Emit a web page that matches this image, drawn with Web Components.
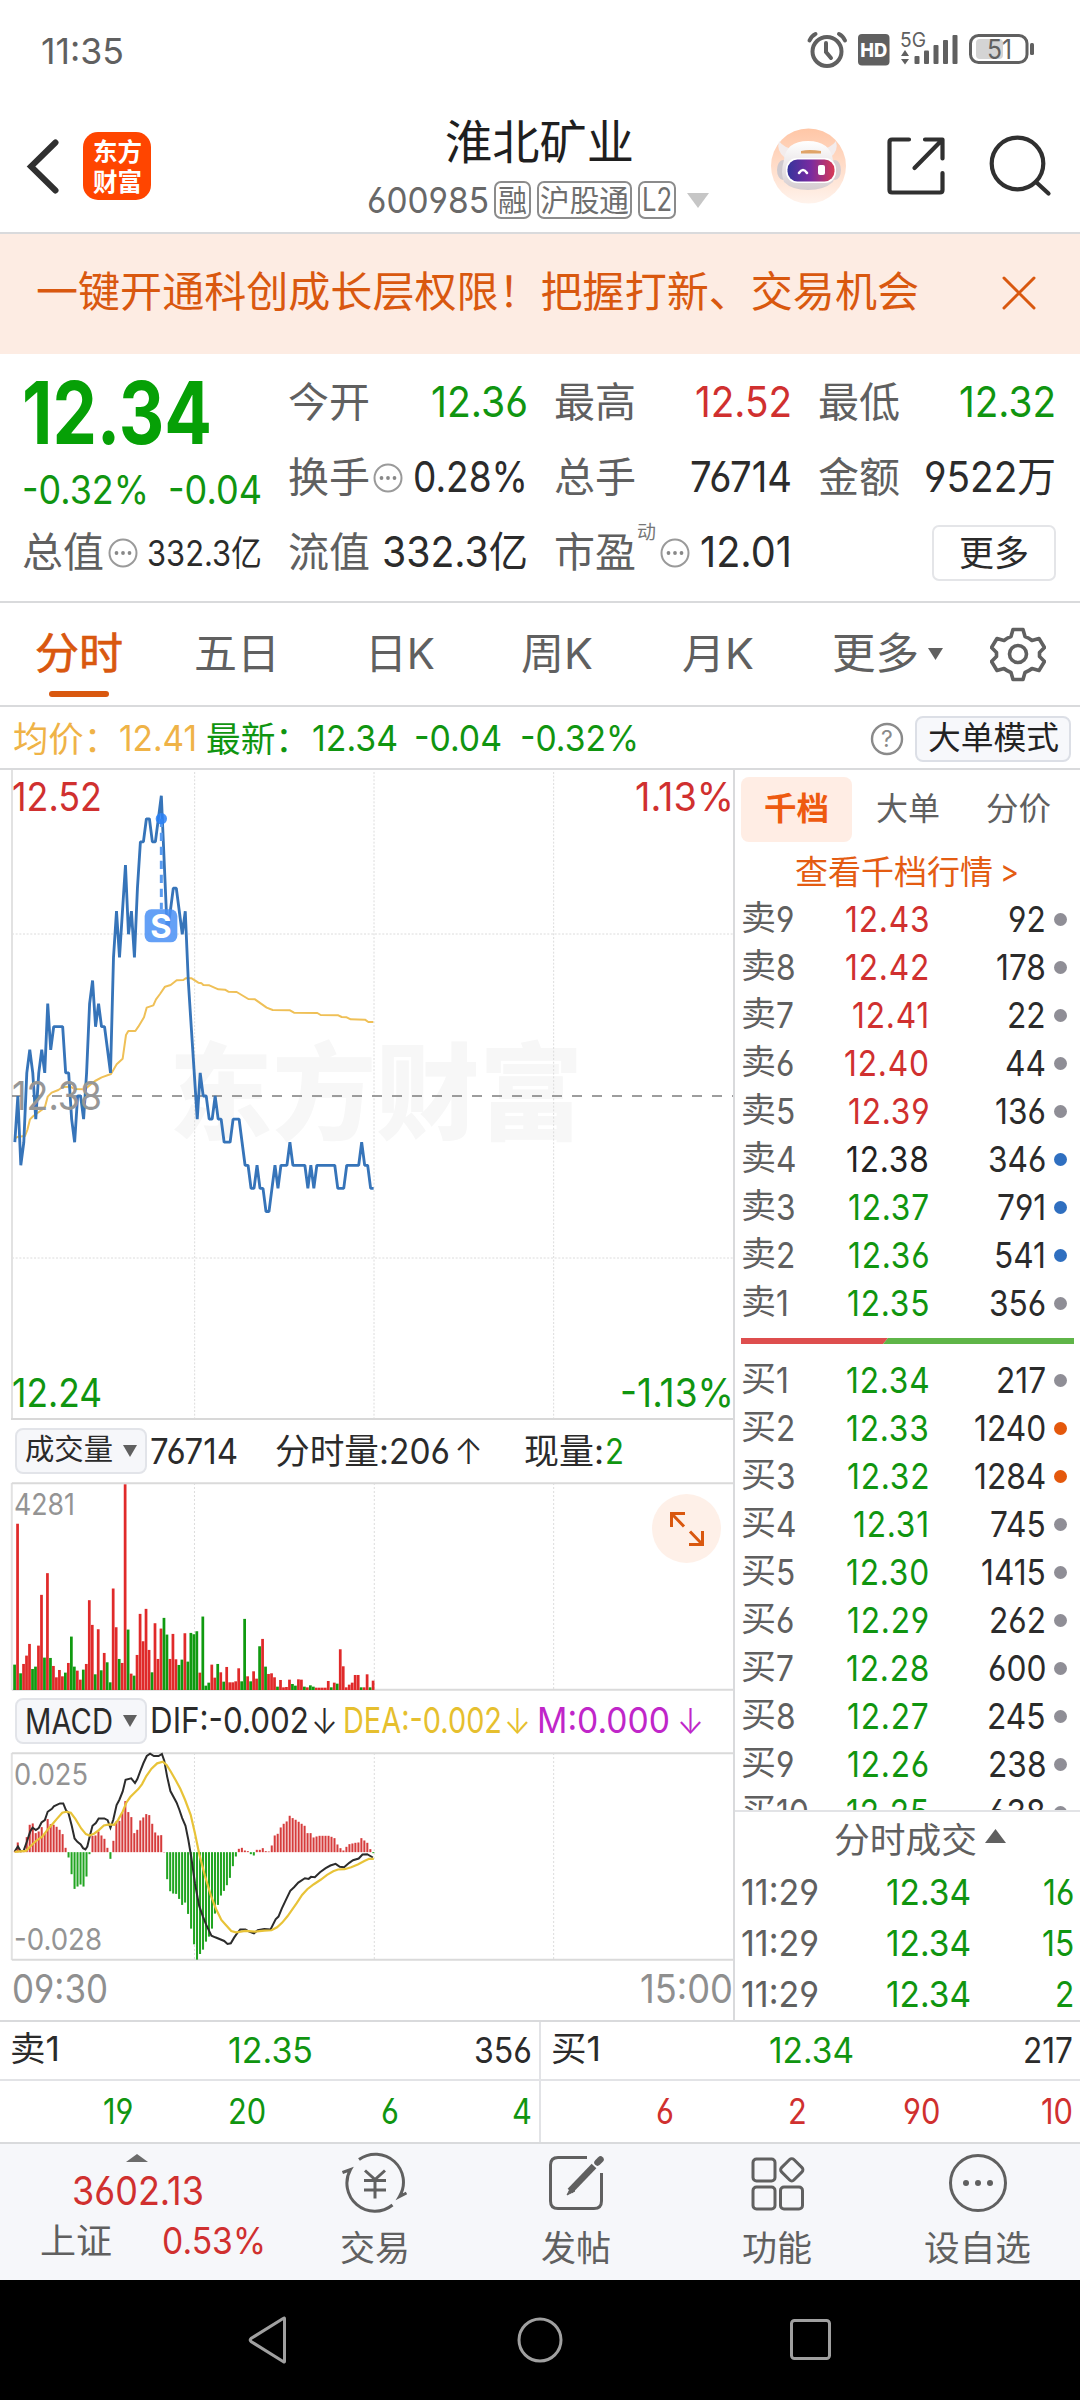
<!DOCTYPE html>
<html lang="zh-CN">
<head>
<meta charset="utf-8">
<title>淮北矿业 600985</title>
<style>
    body {
        margin: 0;
        width: 1080px;
        height: 2400px;
        overflow: hidden;
        background: #fff;
        color: #2b2b2b;
        font-family: Inter, "Noto Sans CJK SC", sans-serif;
        font-feature-settings: "cv03", "cv04";
        font-size: 36px;
        --up: #d0302f;
        --down: #109510;
        --accent: #d9580f;
        --muted: #606060;
        --line: #d9dadc;
    }
</style>
</head>
<body>
<status-bar></status-bar>
<stock-header></stock-header>
<promo-banner>一键开通科创成长层权限！把握打新、交易机会</promo-banner>
<quote-panel></quote-panel>
<period-tabs></period-tabs>
<info-row></info-row>
<trade-board></trade-board>
<level-one></level-one>
<bottom-nav></bottom-nav>
<system-nav></system-nav>

<script>
// Single line of text squeezed to a width (w) or by a ratio (k)
class FitText extends HTMLElement {
    constructor() {
        super();
        this.attachShadow({ mode: 'open' });
        this.shadowRoot.innerHTML = `
            <style>
                :host { display: block; flex: none; white-space: nowrap; line-height: 1.2; }
                span { display: inline-block; transform-origin: 0 50%; vertical-align: top; }
            </style>
            <span><slot></slot></span>
        `;
    }

    connectedCallback() {
        const span = this.shadowRoot.querySelector('span');
        const size = this.getAttribute('s');
        if (size) this.style.fontSize = size + 'px';
        const natural = span.getBoundingClientRect().width;
        const target = this.hasAttribute('w')
            ? Number(this.getAttribute('w'))
            : natural * Number(this.getAttribute('k') || 0.88);
        span.style.transform = `scaleX(${target / natural})`;
        this.style.width = target + 'px';
    }
}
customElements.define('fit-text', FitText);

function t(text, w, s, style = '') {
    const width = w ? `w="${w}"` : '';
    return `<fit-text ${width} s="${s}" style="${style}">${text}</fit-text>`;
}

function define(name, css, html) {
    customElements.define(name, class extends HTMLElement {
        constructor() {
            super();
            this.attachShadow({ mode: 'open' });
        }
        connectedCallback() {
            this.shadowRoot.innerHTML = `<style>
                * { box-sizing: border-box; }
                svg { display: block; flex: none; }
                ${css}
            </style>${typeof html === 'function' ? html(this) : html}`;
        }
    });
}

const more = `<svg width="30" height="30" viewBox="0 0 30 30"><circle cx="15" cy="15" r="13.5" fill="none" stroke="#9a9a9a" stroke-width="2"/><g fill="#888"><circle cx="8.5" cy="15" r="1.9"/><circle cx="15" cy="15" r="1.9"/><circle cx="21.5" cy="15" r="1.9"/></g></svg>`;

define('status-bar', `
    :host { display: flex; height: 101px; justify-content: space-between; align-items: center; color: #606060; padding-left: 41px; box-sizing: border-box; }
`, `
    ${t('11:35', 83, 36, 'margin-top:2px')}
    <svg width="260" height="101" viewBox="820 0 260 101" style="overflow: visible">
        <g fill="none" stroke="#606060" stroke-width="4" stroke-linecap="round">
            <circle cx="827" cy="51.5" r="14.5"/>
            <path d="M826 43v9l5 6M809.500 40.500q2-4.500 6-6.500M845 40.500q-2-4.500-6-6.500"/>
        </g>
        <rect x="858" y="34" width="31.500" height="31.500" rx="4" fill="#606060"/>
        <text x="873.800" y="56.500" font-size="19" font-weight="800" fill="#fff" text-anchor="middle" textLength="27" lengthAdjust="spacingAndGlyphs">HD</text>
        <text x="900" y="46.500" font-size="20" fill="#606060" textLength="26" lengthAdjust="spacingAndGlyphs">5G</text>
        <g fill="#606060">
            <path d="M901 56l4-6 4 6zM901 59h8l-4 5.500z"/>
            <rect x="914.500" y="56" width="5" height="8" rx="1"/>
            <rect x="924" y="50.500" width="5" height="13.500" rx="1"/>
            <rect x="933.500" y="45" width="5" height="19" rx="1"/>
            <rect x="943" y="40" width="5" height="24" rx="1"/>
            <rect x="952.500" y="35" width="5" height="29" rx="1"/>
            <rect x="1030" y="43" width="4" height="12" rx="1.500"/>
        </g>
        <rect x="976" y="39" width="27" height="20" rx="4" fill="#d4d4d4"/>
        <rect x="970.500" y="35.500" width="56.500" height="27" rx="8" fill="none" stroke="#606060" stroke-width="3"/>
        <text x="987" y="58.500" font-size="27" fill="#606060" textLength="25" lengthAdjust="spacingAndGlyphs">51</text>
    </svg>
`);

define('stock-header', `
    :host { display: flex; height: 133px; align-items: flex-start; border-bottom: 2px solid var(--line); box-sizing: border-box; }
    .back { margin: 37px 0 0 26px; }
    .logo { width: 68px; height: 68px; margin: 31px 0 0 22px; border-radius: 15px; background: #ff4500; color: #fff; font-weight: 700; display: flex; flex-direction: column; align-items: center; padding-top: 5px; }
    .mid { width: 370px; margin: 13px 0 0 203px; display: flex; flex-direction: column; align-items: center; }
    .sub { display: flex; align-items: center; width: 100%; padding-left: 13px; color: #686868; height: 42px; margin-top: 9px; }
    .tag { border: 2px solid #8b8b8b; border-radius: 7px; height: 38px; display: flex; align-items: center; justify-content: center; margin-left: 6px; color: #6e6e6e; }
    .acts { display: flex; margin: 21px 0 0 46px; }
`, `
    <svg class="back" width="35" height="56" viewBox="0 0 35 56"><path d="M29.500 4.500L5 28.500l24.500 24" fill="none" stroke="#303030" stroke-width="6" stroke-linecap="round"/></svg>
    <div class="logo">${t('东方', 49, 25)}${t('财富', 49, 25)}</div>
    <div class="mid">
        ${t('淮北矿业', 189, 47, 'color:#1f1f1f')}
        <div class="sub">
            ${t('600985', 122, 36)}
            <div class="tag" style="width:37px;margin-left:5px">${t('融', 29, 30)}</div>
            <div class="tag" style="width:95px">${t('沪股通', 89, 30)}</div>
            <div class="tag" style="width:38px">${t('L2', 30, 32)}</div>
            <svg width="22" height="15" style="margin-left:11px"><path d="M0 0h22L11 15z" fill="#c6c6c6"/></svg>
        </div>
    </div>
    <div class="acts">
        <svg width="310" height="90" viewBox="770 122 310 90">
            <defs>
                <linearGradient id="halo" x1="0" y1="0" x2="0" y2="1"><stop offset="0" stop-color="#ffc6a6"/><stop offset="1" stop-color="#fff3ec"/></linearGradient>
                <linearGradient id="visor"><stop offset="0" stop-color="#35349c"/><stop offset=".5" stop-color="#7a2aa0"/><stop offset="1" stop-color="#d83a55"/></linearGradient>
                <linearGradient id="head" x1="0" y1="0" x2="0" y2="1"><stop offset="0" stop-color="#fff"/><stop offset="1" stop-color="#d5cdd0"/></linearGradient>
            </defs>
            <circle cx="808.500" cy="166" r="37.500" fill="url(#halo)"/>
            <path d="M779 141q-3 10 6 17l9-9q-10-1-15-8zM836 141q3 10-6 17l-9-9q10-1 15-8z" fill="#f3ecec"/>
            <ellipse cx="783" cy="170" rx="6" ry="10" fill="#cfc9ce"/>
            <ellipse cx="835" cy="170" rx="6" ry="10" fill="#d8cdd0"/>
            <path d="M784 160q2-19 24-19t25 19q4 15 0 22-9 8-25 8t-24-8q-4-9 0-22z" fill="url(#head)"/>
            <path d="M801 151q8-2 20 0v2.500h-20z" fill="#e0a468"/>
            <rect x="786" y="158" width="50" height="25" rx="11" fill="#fff"/>
            <rect x="787.500" y="159.500" width="47" height="22" rx="10" fill="url(#visor)"/>
            <path d="M799 173q4-6 8 0" fill="none" stroke="#fff" stroke-width="2.600" stroke-linecap="round"/>
            <rect x="818" y="165" width="7" height="10" rx="2" fill="#fff"/>
            <g fill="none" stroke="#303030" stroke-width="4.200" stroke-linecap="round" stroke-linejoin="round">
                <path d="M909 139.500h-17q-2.500 0-2.500 2.500v48q0 2.500 2.500 2.500h48q2.500 0 2.500-2.500v-17M925 139.500h17.500v19M941 141l-26.500 27"/>
                <circle cx="1017.500" cy="163.500" r="25.800" stroke-width="4.200"/>
                <path d="M1036 182l12.500 11.500"/>
            </g>
        </svg>
    </div>
`);

define('promo-banner', `
    :host { display: flex; height: 120px; align-items: center; background: #fdece3; color: var(--accent); padding: 0 44px 3px 36px; box-sizing: border-box; justify-content: space-between; }
`, el => `
    ${t(el.textContent, 883, 42)}
    <svg width="34" height="34"><path d="M2 2l30 30M32 2L2 32" stroke="#d9580f" stroke-width="3" stroke-linecap="round"/></svg>
`);

define('quote-panel', `
    :host { display: grid; height: 249px; grid-template-columns: 240px 240px 238px 238px; grid-template-rows: 75px 75px 75px; column-gap: 26px; padding: 11px 24px 0 22px; border-bottom: 2px solid var(--line); box-sizing: border-box; column-gap: 26px; }
    .last { grid-row: 1 / span 2; color: #06a006; }
    .pct { display: flex; height: 62px; align-items: center; justify-content: space-between; color: var(--down); }
    .big { height: 94px; display: flex; align-items: center; font-weight: 700; padding-top: 4px; }
    .cell { display: flex; align-items: center; height: 75px; }
    .lab { color: var(--muted); }
    .val { margin-left: auto; }
    .btn { width: 124px; height: 56px; border: 2px solid #e4e5e8; border-radius: 7px; margin-left: auto; display: flex; align-items: center; justify-content: center; }
    sup { align-self: flex-start; margin: 7px 4px 0 1px; color: #777; line-height: 0; }
`, () => {
    const cell = (label, value, w, color, extra = '', s = 42) => `
        <div class="cell"><div class="lab">${t(label, 82, 41)}</div>${extra}
        <div class="val">${t(value, w, s, `color:${color}`)}</div></div>`;
    return `
        <div class="last">
            <div class="big">${t('12.34', 190, 86)}</div>
            <div class="pct">${t('-0.32%', 127, 39)}${t('-0.04', 94, 39)}</div>
        </div>
        ${cell('今开', '12.36', 97, 'var(--down)')}
        ${cell('最高', '12.52', 97, 'var(--up)')}
        ${cell('最低', '12.32', 97, 'var(--down)')}
        ${cell('换手', '0.28%', 115, '#2b2b2b', `<div style="margin-left:3px">${more}</div>`)}
        ${cell('总手', '76714', 102, '#2b2b2b')}
        ${cell('金额', '9522万', 132, '#2b2b2b')}
        ${cell('总值', '332.3亿', 115, '#2b2b2b', `<div style="margin-left:4px">${more}</div>`, 35)}
        ${cell('流值', '332.3亿', 146, '#2b2b2b')}
        ${cell('市盈', '12.01', 92, '#2b2b2b', `<sup>${t('动', 19, 19)}</sup>${more}`)}
        <div class="cell"><div class="btn">${t('更多', 70, 35)}</div></div>
    `;
});

define('period-tabs', `
    :host { display: flex; height: 104px; align-items: center; border-bottom: 2px solid var(--line); box-sizing: border-box; color: var(--muted); padding-left: 35px; }
    .on { color: var(--accent); -webkit-text-stroke: .7px var(--accent); position: relative; }
    .on i { position: absolute; left: 14px; bottom: -17px; width: 60px; height: 6px; border-radius: 3px; background: var(--accent); }
`, () => {
    const teeth = 'M-5-25h10l2 7q4 1.500 7 4l7-2 5.500 9-5 5v4l5 5-5.500 9-7-2q-3 2.500-7 4l-2 7h-10l-2-7q-4-1.500-7-4l-7 2-5.500-9 5-5v-4l-5-5 5.500-9 7 2q3-2.500 7-4z';
    return `
        <div class="on">${t('分时', 88, 43)}<i></i></div>
        ${t('五日', 86, 42, 'margin-left:71px')}
        ${t('日K', 70, 42, 'margin-left:85px')}
        ${t('周K', 72, 42, 'margin-left:86px')}
        ${t('月K', 72, 42, 'margin-left:89px')}
        ${t('更多', 87, 43, 'margin-left:78px')}
        <svg width="15" height="12" style="margin-left:9px"><path d="M0 0h15L7.500 12z" fill="#606060"/></svg>
        <svg width="56" height="56" viewBox="-28 -28 56 56" style="margin-left:47px"><path d="${teeth}" transform="translate(0 .5)" fill="none" stroke="#606060" stroke-width="3.600" stroke-linejoin="round"/><circle r="8.500" fill="none" stroke="#606060" stroke-width="3.600"/></svg>
    `;
});

define('info-row', `
    :host { display: flex; height: 63px; align-items: center; border-bottom: 2px solid var(--line); box-sizing: border-box; padding: 2px 0 0 13px; color: var(--down); }
    .btn { width: 156px; height: 46px; background: #f7f8fb; border: 2px solid #dcdfe6; border-radius: 8px; display: flex; justify-content: center; align-items: center; margin-left: 11px; color: #222; }
`, `
    ${t('均价：', 106, 35, 'color:#efb347')}
    ${t('12.41', 78, 36, 'color:#efb347')}
    ${t('最新：', 104, 35, 'margin-left:9px')}
    ${t('12.34', 86, 36, 'margin-left:2px')}
    ${t('-0.04', 88, 36, 'margin-left:16px')}
    ${t('-0.32%', 119, 36, 'margin-left:18px')}
    <svg width="34" height="34" viewBox="0 0 34 34" style="margin-left:231px"><circle cx="17" cy="17" r="15" fill="none" stroke="#8a8a8a" stroke-width="2.400"/><text x="17" y="25" font-size="23" fill="#8a8a8a" text-anchor="middle">?</text></svg>
    <div class="btn">${t('大单模式', 131, 32)}</div>
`);

define('trade-board', `
    :host { display: flex; height: 1252px; border-bottom: 2px solid var(--line); box-sizing: border-box; }
    .charts { width: 735px; border-right: 2px solid var(--line); display: flex; flex-direction: column; }
    .times { display: flex; justify-content: space-between; align-items: center; height: 58px; padding: 0 0 0 12px; color: #8f8f8f; }
`, `
    <div class="charts">
        <price-chart></price-chart>
        <volume-chart></volume-chart>
        <macd-chart></macd-chart>
        <div class="times">${t('09:30', 96, 39)}${t('15:00', 93, 39)}</div>
    </div>
    <order-book></order-book>
`);

// One value per minute, in cents away from the previous close 12.38
const prices = [
    -2, 0, -3, -2, 1, 2, 1, -1, 1, 2, 1, 4, 2, 3, 3, 3, 3, 1, 1, -1,
    -2, 0, 0, -1, 1, 4, 5, 3, 4, 3, 3, 2, 1, 6, 8, 6, 8, 10, 7, 8,
    6, 9, 11, 11, 12, 12, 11, 11, 12, 13, 10, 7, 8, 9, 9, 8, 7, 8, 5, 3,
    1, -1, 1, 0, 0, -1, -1, 0, -1, -1, -2, -2, -2, -1, -1, -1, -2, -3, -3, -4,
    -4, -3, -4, -4, -5, -5, -4, -3, -4, -3, -3, -3, -2, -3, -3, -3, -3, -3, -4, -3,
    -4, -3, -3, -3, -3, -3, -3, -3, -4, -4, -4, -3, -3, -3, -3, -3, -2, -3, -3, -4, -4
];
const average = '44,1105 55,1100 75,1098 82,1080 90,1048 100,1038 125,1020 135,1010 143,980 155,968 175,960 188,951 210,950 225,957 255,958 270,945 285,933 305,922 333,912 350,883 368,866 378,795 385,783 406,783 415,770 432,742 440,713 460,706 468,688 480,672 495,650 512,645 530,631 550,630 557,625 575,625 595,638 605,640 610,645 628,646 655,658 675,659 685,665 710,666 745,687 765,688 800,713 818,720 870,721 882,728 952,729 962,735 1015,736 1025,741 1040,742 1052,748 1095,749 1105,756 1120,756';

define('price-chart', `
    :host { display: block; position: relative; height: 650px; }
    .l { position: absolute; left: 12px; }
    .r { position: absolute; right: -1px; }
    .wm { position: absolute; left: 169px; top: 260px; font-weight: 900; color: #f7f7f7; }
    svg { position: relative; }
`, () => {
    const line = prices.map((p, i) => `${(44.5 + i * 8.97).toFixed(1)},${(978 - p * 69.3).toFixed(1)}`).join(' ');
    return `
        <div class="wm">${t('东方财富', 414, 105)}</div>
        <svg width="733" height="650" viewBox="0 0 2199 1950">
            <g fill="none" stroke="#dcdcdc" stroke-width="3" stroke-dasharray="6 5">
                <path d="M584 6V1945M1122 6V1945M1661 6V1945M36 492H2199M36 1464H2199"/>
            </g>
            <path d="M36 0V1950" stroke="#e2e2e2" stroke-width="6"/>
            <path d="M33 1947H2199" stroke="#d8d8d8" stroke-width="6"/>
            <path d="M36 978H2199" stroke="#7d7d7d" stroke-width="5" stroke-dasharray="30 30"/>
            <polyline points="${average}" fill="none" stroke="#efc057" stroke-width="6" stroke-linejoin="round"/>
            <polyline points="${line}" fill="none" stroke="#3674b9" stroke-width="8.500" stroke-linejoin="bevel"/>
            <path d="M484 146V418" stroke="#5a9cf0" stroke-width="9" stroke-dasharray="25 17"/>
            <circle cx="484" cy="146" r="17" fill="#2a80f5" fill-opacity=".85"/>
            <rect x="434" y="418" width="98" height="99" rx="20" fill="#4a90f5" fill-opacity=".86"/>
            <text x="483" y="504" font-size="98" font-weight="700" fill="#fff" text-anchor="middle">S</text>
        </svg>
        <div class="l" style="top:4px;color:var(--up)">${t('12.52', 90, 39)}</div>
        <div class="r" style="top:4px;color:var(--up)">${t('1.13%', 99, 39)}</div>
        <div class="l" style="top:303px;color:#969696">${t('12.38', 90, 39)}</div>
        <div class="l" style="top:600px;color:var(--down)">${t('12.24', 90, 39)}</div>
        <div class="r" style="top:600px;color:var(--down)">${t('-1.13%', 114, 39)}</div>
    `;
});

const panelCss = `
    :host { display: block; height: 270px; }
    .head { display: flex; height: 63px; align-items: center; padding: 0 0 2px 15px; }
    .pick { width: 132px; height: 46px; background: #f6f7fa; border: 2px solid #e2e4e9; border-radius: 8px; display: flex; align-items: center; justify-content: center; gap: 10px; margin-right: 3px; }
    .plot { position: relative; height: 207px; }
    .plot span { position: absolute; left: 14px; color: #949494; }
    .plot svg { overflow: visible; }
`;
const pickArrow = '<svg width="14" height="12"><path d="M0 0h14L7 12z" fill="#606060"/></svg>';
const frame = `
    <g fill="none" stroke="#dcdcdc" stroke-width="1" stroke-dasharray="2 2">
        <path d="M412 0V620M793 0V620M1173 0V620" vector-effect="non-scaling-stroke"/>
    </g>
    <path d="M25 0V620" stroke="#e2e2e2" stroke-width="2" vector-effect="non-scaling-stroke"/>
    <path d="M25 1H1553M25 619H1553" stroke="#dadada" stroke-width="2" vector-effect="non-scaling-stroke"/>`;

// r = up minute, g = down minute; number is the bar height
const volumes = 'g76 r498 g50 r78 r103 r138 g63 g70 r133 r285 g97 r350 g96 r72 r38 r60 r41 g52 r81 g160 g70 r58 r31 g61 r78 r269 r195 g47 r182 g59 r111 g83 g23 r304 r188 g93 r81 r616 g181 r49 g43 r105 r228 r146 r243 r120 g53 r200 r93 r184 g216 g166 r93 r168 r92 g75 g91 r170 g85 g171 g167 g176 r52 g220 g13 g22 r76 r37 g78 r53 g25 r69 r23 r23 r26 r65 g26 g213 r41 g26 r56 r34 g131 r153 g70 r48 r50 r38 g10 r30 r8 r9 r31 g18 g13 r32 r31 g10 r8 g14 g10 r7 r7 r7 r7 r27 g8 r22 g19 r122 r71 r8 r16 r22 r45 r45 g8 r8 r47 g8 r28'.split(' ');

define('volume-chart', panelCss + `
    .zoom { position: absolute; left: 652px; top: 11px; width: 69px; height: 69px; border-radius: 50%; background: #fef0e8; display: flex; align-items: center; justify-content: center; }
`, () => {
    const bars = volumes.map((v, i) => {
        const h = Number(v.slice(1));
        return `<rect x="${(28 + i * 6.33).toFixed(1)}" y="${620 - h}" width="5.800" height="${h}" fill="${v[0] === 'r' ? '#e02a2a' : '#109a10'}"/>`;
    }).join('');
    return `
        <div class="head">
            <div class="pick">${t('成交量', 88, 29)}${pickArrow}</div>
            ${t('76714', 88, 35)}
            ${t('分时量:', 114, 35, 'margin-left:37px')}
            ${t('206', 61, 35)}
            ${t('↑', 29, 35, 'margin-left:4px;font-weight:300')}
            ${t('现量:', 80, 35, 'margin-left:41px')}
            ${t('2', 19, 35, 'color:var(--down);margin-left:1px')}
        </div>
        <div class="plot">
            <svg width="733" height="207" viewBox="0 0 1553 620" preserveAspectRatio="none">${frame}${bars}</svg>
            <span style="top:3px">${t('4281', 61, 30)}</span>
            <div class="zoom"><svg width="36" height="36" viewBox="0 0 36 36" fill="none" stroke="#d9580f" stroke-width="3"><path d="M2.500 16V2.500H16M3 3l12 12.500M33.500 20v13.500H20M33 33L21 20.500"/></svg></div>
        </div>
    `;
});

const macd = [
    3, 29, 3, 3, 45, 82, 86, 57, 62, 75, 55, 99, 84, 82, 76, 67, 54, 13, -16, -66,
    -110, -103, -97, -103, -73, -6, 49, 50, 62, 50, 40, 13, -20, 34, 92, 94, 119, 153, 120, 105,
    57, 67, 95, 104, 114, 111, 85, 59, 50, 51, 0, -81, -117, -124, -125, -140, -158, -151, -185, -229,
    -276, -322, -305, -292, -268, -253, -229, -184, -158, -130, -116, -99, -77, -42, -13, 10, 13, 5, 3, -6,
    -10, 7, 7, 12, 3, 2, 20, 50, 55, 74, 85, 92, 109, 102, 97, 91, 85, 79, 57, 57,
    44, 47, 49, 49, 49, 49, 46, 42, 23, 12, 5, 16, 24, 26, 28, 29, 42, 35, 28, 9, -3
];
const dif = '31,485 38,470 44,484 50,483 57,455 64,425 69,414 76,421 82,415 88,398 95,391 101,366 110,357 114,350 127,341 134,341 140,362 145,370 152,408 158,446 164,456 171,464 176,475 181,479 185,470 190,440 196,408 203,400 209,386 221,386 228,391 234,414 240,390 247,346 253,330 260,305 266,270 278,266 286,280 291,268 297,245 304,220 311,199 318,192 326,199 336,199 343,193 348,213 354,260 361,304 374,338 380,360 386,385 393,408 399,450 405,500 413,580 422,648 430,680 437,705 448,737 456,742 475,753 482,762 489,760 496,743 503,729 509,719 520,719 528,725 538,730 546,721 560,717 573,719 584,688 590,680 597,656 605,632 615,603 623,592 632,578 646,565 654,567 659,561 667,562 678,547 690,535 700,527 711,522 720,531 729,532 740,519 748,511 760,506 768,494 778,493 790,503';
const dea = '31,486 55,483 64,470 75,455 90,440 100,421 110,405 120,388 132,369 140,366 150,369 160,388 172,416 182,433 190,437 200,431 210,420 220,407 232,404 242,405 250,391 260,365 268,338 276,322 285,309 293,298 301,283 310,259 321,237 333,221 345,216 353,226 362,246 372,271 382,297 392,330 404,375 413,430 422,492 434,557 447,618 458,658 469,690 479,706 490,723 500,727 520,723 540,725 560,722 575,721 587,712 598,698 609,679 619,659 629,639 640,615 651,598 665,583 680,569 693,555 706,544 716,539 730,538 744,532 758,524 773,513 782,507 792,507';

define('macd-chart', panelCss, () => {
    const bars = macd.map((v, i) => {
        const y = v > 0 ? 297 - v : 297;
        return `<rect x="${(29.2 + i * 6.33).toFixed(1)}" y="${y}" width="4.300" height="${Math.abs(v) || 1}" fill="${v < 0 ? '#22a522' : '#d63c3c'}"/>`;
    }).join('');
    return `
        <div class="head">
            <div class="pick">${t('MACD', 88, 35)}${pickArrow}</div>
            ${t('DIF:-0.002', 159, 36)}
            ${t('↓', 27, 35, 'margin-left:2px;font-weight:300')}
            ${t('DEA:-0.002', 159, 36, 'color:#e6bf2e;margin-left:5px')}
            ${t('↓', 27, 35, 'color:#e6bf2e;margin-left:2px;font-weight:300')}
            ${t('M:0.000', 133, 36, 'color:#c026c9;margin-left:6px')}
            ${t('↓', 27, 35, 'color:#c026c9;margin-left:7px;font-weight:300')}
        </div>
        <div class="plot">
            <svg width="733" height="207" viewBox="0 0 1553 620" preserveAspectRatio="none">
                ${frame}${bars}
                <g transform="translate(0 -190)" fill="none">
                    <polyline points="${dif}" stroke="#2c2c2c" stroke-width="2" vector-effect="non-scaling-stroke"/>
                    <polyline points="${dea}" stroke="#e8c338" stroke-width="2.200" vector-effect="non-scaling-stroke"/>
                </g>
            </svg>
            <span style="top:3px">${t('0.025', 74, 30)}</span>
            <span style="top:168px">${t('-0.028', 88, 30)}</span>
        </div>
    `;
});

define('depth-row', `
    :host { display: flex; height: 48px; align-items: center; flex: none; }
    .name { width: 86px; color: #606060; display: flex; }
    .price { width: 103px; display: flex; justify-content: flex-end; letter-spacing: .9px; }
    .qty { width: 116px; display: flex; justify-content: flex-end; }
    i { width: 13px; height: 13px; border-radius: 50%; margin-left: 8px; }
`, el => {
    const [name, price, qty, dot] = el.getAttribute('data').split(' ');
    const color = price > 12.38 ? 'var(--up)' : price < 12.38 ? 'var(--down)' : '#222';
    return `
        <div class="name">${t(name[0], 35, 34)}${t(name.slice(1), 0, 36)}</div>
        <div class="price" style="color:${color}">${t(price, 0, 36)}</div>
        <div class="qty">${t(qty, 0, 36)}</div>
        <i style="background:${{ b: '#2f6fc0', o: '#e4580c' }[dot] || '#8f8e96'}"></i>
    `;
});

const asks = ['卖9 12.43 92', '卖8 12.42 178', '卖7 12.41 22', '卖6 12.40 44', '卖5 12.39 136', '卖4 12.38 346 b', '卖3 12.37 791 b', '卖2 12.36 541 b', '卖1 12.35 356'];
const bids = ['买1 12.34 217', '买2 12.33 1240 o', '买3 12.32 1284 o', '买4 12.31 745', '买5 12.30 1415', '买6 12.29 262', '买7 12.28 600', '买8 12.27 245', '买9 12.26 238', '买10 12.25 638'];
const trades = [16, 15, 2];

define('order-book', `
    :host { display: flex; flex-direction: column; width: 345px; padding-left: 6px; box-sizing: border-box; }
    .tabs { display: flex; height: 72px; padding-top: 7px; color: var(--muted); }
    .tabs div { width: 111px; height: 65px; display: flex; align-items: center; justify-content: center; }
    .tabs .on { background: #ffede4; border-radius: 8px; color: #ee5a10; font-weight: 700; }
    .link { display: flex; align-items: center; height: 53px; padding: 8px 0 0 54px; color: #e45c12; }
    .asks { height: 434px; padding-top: 1px; }
    .bids { height: 467px; overflow: hidden; display: flex; flex-direction: column; padding-top: 13px; }
    .deal { display: flex; height: 57px; align-items: center; justify-content: center; border-top: 2px solid #e2e3e6; margin-left: -6px; gap: 8px; padding-left: 32px; padding-right: 7px; color: var(--muted); }
    .trade { display: flex; height: 51px; align-items: center; color: var(--down); }
    .trade .p { width: 152px; display: flex; justify-content: flex-end; }
    .trade .q { width: 103px; display: flex; justify-content: flex-end; }
`, () => `
    <div class="tabs">
        <div class="on">${t('千档', 65, 32)}</div><div>${t('大单', 64, 32)}</div><div>${t('分价', 65, 32)}</div>
    </div>
    <div class="link">${t('查看千档行情', 198, 32.5)}${t('&gt;', 19, 32, 'margin-left:7px')}</div>
    <div class="asks">${asks.map(d => `<depth-row data="${d}"></depth-row>`).join('')}</div>
    <svg width="333" height="6" style="margin:9px 0 0"><path d="M0 0h147l-5 6H0z" fill="#de4e4e"/><path d="M147 0h186v6H142z" fill="#5fb548"/></svg>
    <div class="bids">${bids.map(d => `<depth-row data="${d}"></depth-row>`).join('')}</div>
    <div class="deal">${t('分时成交', 143, 35)}<svg width="21" height="14" style="margin-top:-8px"><path d="M0 14L10.500 0 21 14z" fill="#606060"/></svg></div>
    ${trades.map(n => `<div class="trade">${t('11:29', 78, 36, 'color:#606060')}<div class="p">${t('12.34', 85, 36)}</div><div class="q">${t(n, 0, 36)}</div></div>`).join('')}
`);

define('level-one', `
    :host { display: grid; grid-template-columns: 539px 541px; height: 122px; border-bottom: 2px solid var(--line); box-sizing: border-box; }
    .side + .side { border-left: 2px solid #e2e3e6; }
    .best { display: flex; height: 59px; align-items: center; border-bottom: 2px solid #e2e3e6; justify-content: space-between; padding: 0 7px 2px 10px; }
    .side:first-child .best { padding-right: 8px; }
    .side:first-child .q { padding-right: 5px; }
    .q { display: grid; grid-template-columns: repeat(4, 1fr); height: 59px; align-items: center; justify-items: end; padding-right: 7px; }
`, `
    <div class="side">
        <div class="best">${t('卖1', 50, 34)}${t('12.35', 85, 35, 'color:var(--down);margin-left:6px')}${t('356', 58, 35)}</div>
        <div class="q" style="color:var(--down)">${[19, 20, 6, 4].map(n => t(n, 0, 35)).join('')}</div>
    </div>
    <div class="side">
        <div class="best">${t('买1', 50, 34)}${t('12.34', 85, 35, 'color:var(--down);margin-left:-1px')}${t('217', 50, 35)}</div>
        <div class="q" style="color:var(--up)">${[6, 2, 90, 10].map(n => t(n, 0, 35)).join('')}</div>
    </div>
`);

define('bottom-nav', `
    :host { display: flex; height: 136px; background: #f6f7fa; color: var(--muted); }
    .idx { width: 274px; display: flex; flex-direction: column; align-items: center; color: var(--up); padding-top: 10px; }
    .idx p { margin: 0; display: flex; padding-left: 31px; gap: 50px; align-items: center; height: 52px; }
    .item { width: 201px; display: flex; flex-direction: column; align-items: center; padding-top: 8px; gap: 13px; }
`, () => {
    const item = (label, w, icon) => `<div class="item"><svg width="66" height="62" viewBox="-33 -31 66 62" fill="none" stroke="#606060" stroke-width="3">${icon}</svg>${t(label, w, 35)}</div>`;
    return `
        <div class="idx">
            <svg width="22" height="8"><path d="M0 8L11 0l11 8z" fill="#6b6b6b"/></svg>
            ${t('3602.13', 132, 39, 'margin-top:6px;margin-left:2px')}
            <p>${t('上证', 72, 35, 'color:#606060')}${t('0.53%', 104, 37)}</p>
        </div>
        ${item('交易', 70, `
            <path d="M-16-23.500A28 28 0 0 1 24.500 13.500l7-3.500M17.500 22A28 28 0 0 1-24.500-13.500l-8 3"/>
            <path d="M-10-12.500L0-3.500 10-12.500M-11-2.500h22M-11 7h22M0-3.500V15.500"/>`)}
        ${item('发帖', 70, `
            <path d="M11-25.500h-29q-7.500 0-7.500 7.500v36q0 7.500 7.500 7.500h36q7.500 0 7.500-7.500v-28"/>
            <path d="M18-17l-24 25" stroke-width="6.500"/><path d="M-5 4l-4 8 8-4z" fill="#606060" stroke-width="1"/><path d="M21.500-20.500l3-3" stroke-width="6.500" stroke-linecap="round"/>`)}
        ${item('功能', 70, `
            <rect x="-24" y="-24" width="22" height="22" rx="3.500"/><rect x="-24" y="4" width="22" height="22" rx="3.500"/><rect x="3.500" y="4" width="22" height="22" rx="3.500"/>
            <rect x="6" y="-22" width="17.500" height="17.500" rx="3" transform="rotate(45 14.700 -13.200)"/>`)}
        ${item('设自选', 107, `
            <circle r="27.500"/><g fill="#606060" stroke="none"><circle cx="-12" r="3"/><circle r="3"/><circle cx="12" r="3"/></g>`)}
    `;
});

define('system-nav', `
    :host { display: flex; height: 120px; background: #000; align-items: center; justify-content: space-between; padding: 0 248px; box-sizing: border-box; }
`, `
    <svg width="42" height="48" viewBox="0 0 42 48"><path d="M36.500 2.500v43q0 1-1 .3L3 25.500q-1.500-1.500 0-3L35.500 2.200q1-.7 1 .3z" fill="none" stroke="#a0a0a0" stroke-width="3"/></svg>
    <svg width="48" height="48" viewBox="-24 -24 48 48"><circle r="21" fill="none" stroke="#a0a0a0" stroke-width="3"/></svg>
    <svg width="42" height="42"><rect x="1.500" y="1.500" width="38" height="38" rx="3" fill="none" stroke="#a0a0a0" stroke-width="3"/></svg>
`);
</script>
</body>
</html>
